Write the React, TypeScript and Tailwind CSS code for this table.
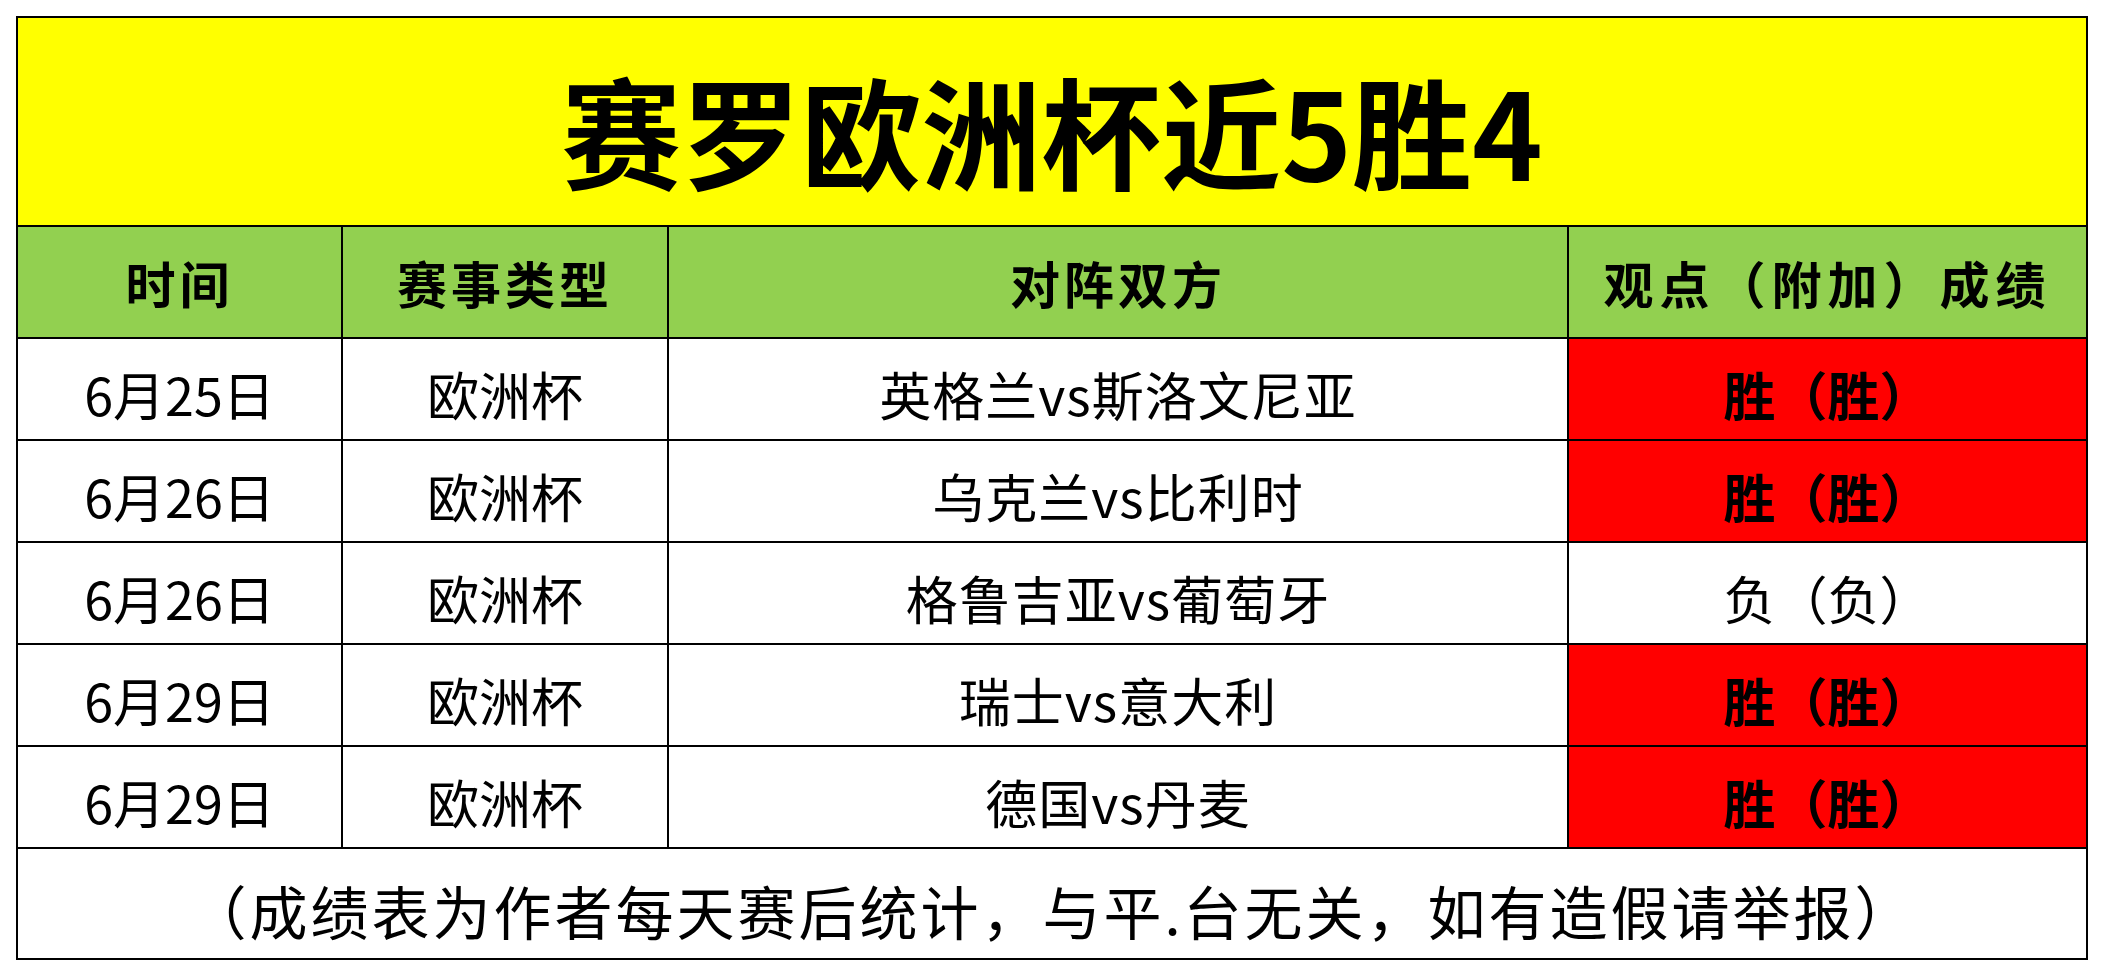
const rows = [
  { date: "6月25日", type: "欧洲杯", match: "英格兰vs斯洛文尼亚", result: "胜（胜）", win: true },
  { date: "6月26日", type: "欧洲杯", match: "乌克兰vs比利时", result: "胜（胜）", win: true },
  { date: "6月26日", type: "欧洲杯", match: "格鲁吉亚vs葡萄牙", result: "负（负）", win: false },
  { date: "6月29日", type: "欧洲杯", match: "瑞士vs意大利", result: "胜（胜）", win: true },
  { date: "6月29日", type: "欧洲杯", match: "德国vs丹麦", result: "胜（胜）", win: true },
];

const font = "font-['Noto_Sans_CJK_SC',sans-serif]";

export default function App() {
  return (
    <div className={`min-h-screen bg-white p-4 text-black ${font}`}>
      <div className="w-[2072px] border-2 border-black">
        {/* title */}
        <div className="flex h-[209px] items-center justify-center border-b-2 border-black bg-[#ffff00] pt-[14px]">
          <span className="text-[120px] font-bold leading-none">赛罗欧洲杯近5胜4</span>
        </div>

        {/* header */}
        <div className="grid h-[112px] grid-cols-[325px_326px_900px_517px] border-b-2 border-black bg-[#92d050] text-[50px] font-bold leading-none">
          <div className="flex items-center justify-center border-r-2 border-black tracking-[4px]">时间</div>
          <div className="flex items-center justify-center border-r-2 border-black tracking-[4px]">赛事类型</div>
          <div className="flex items-center justify-center border-r-2 border-black tracking-[4px]">对阵双方</div>
          <div className="flex items-center justify-center tracking-[6px]">观点（附加）成绩</div>
        </div>

        {/* rows */}
        {rows.map((r, i) => (
          <div
            key={i}
            className="grid h-[102px] grid-cols-[325px_326px_900px_517px] border-b-2 border-black text-[52px] leading-none"
          >
            <div className="flex items-center justify-center border-r-2 border-black pt-[10px]">{r.date}</div>
            <div className="flex items-center justify-center border-r-2 border-black pt-[10px]">{r.type}</div>
            <div className="flex items-center justify-center border-r-2 border-black pt-[10px] tracking-[1px]">{r.match}</div>
            <div
              className={
                r.win
                  ? "flex items-center justify-center bg-[#ff0000] pt-[10px] font-bold"
                  : "flex items-center justify-center pt-[10px]"
              }
            >
              {r.result}
            </div>
          </div>
        ))}

        {/* footer */}
        <div className="flex h-[109px] items-center justify-center pt-[12px] text-[58px] leading-none tracking-[3px]">
          （成绩表为作者每天赛后统计，与平.台无关，如有造假请举报）
        </div>
      </div>
    </div>
  );
}
